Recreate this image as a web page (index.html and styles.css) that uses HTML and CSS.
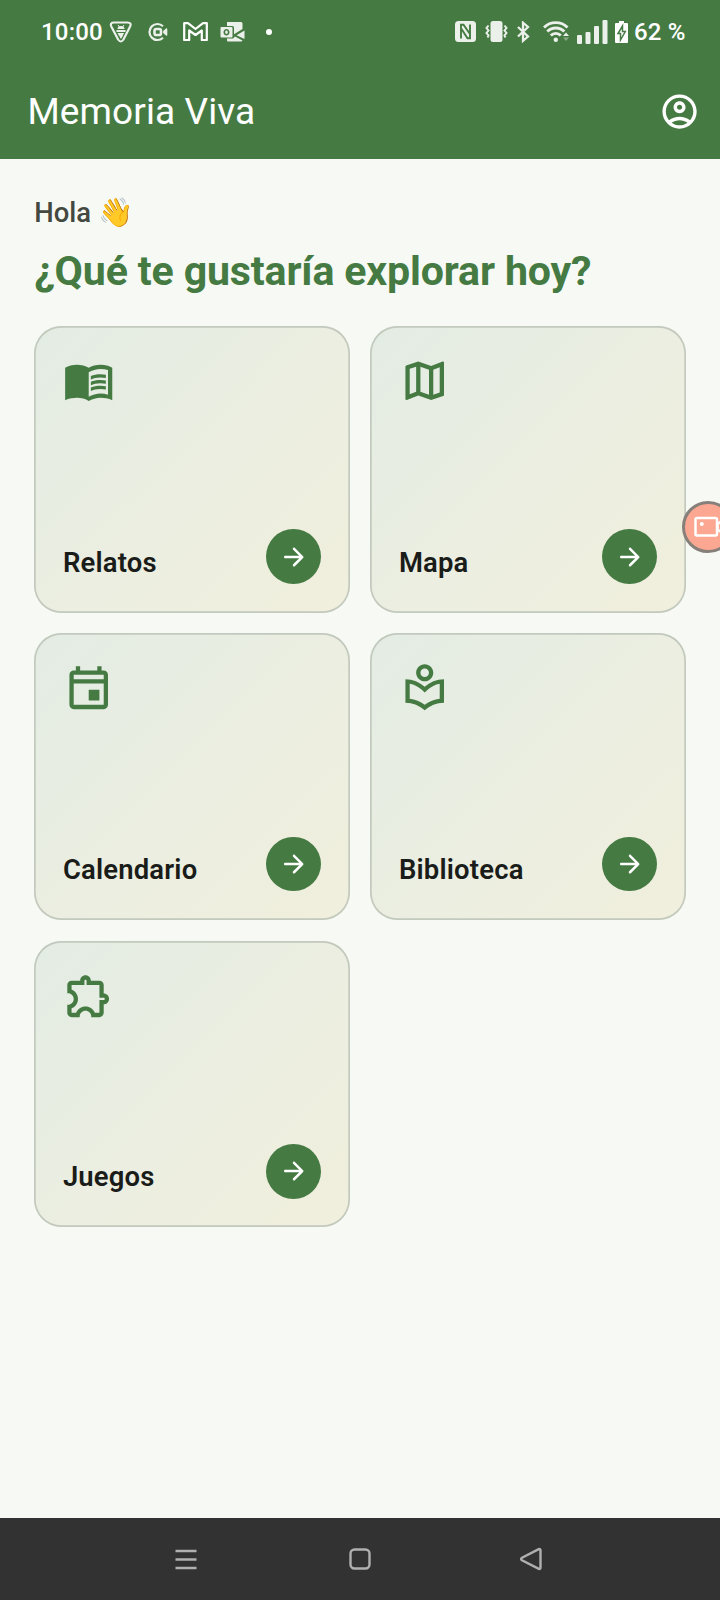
FILE: index.html
```html
<!DOCTYPE html>
<html lang="es">
<head>
<meta charset="utf-8">
<title>Memoria Viva</title>
<link rel="stylesheet" href="styles.css">
</head>
<body>
<svg class="defs" width="0" height="0" aria-hidden="true">
  <symbol id="arrow" viewBox="0 0 24 24"><path d="M5 13h11.17l-4.88 4.88c-.39.39-.39 1.03 0 1.42.39.39 1.02.39 1.41 0l6.59-6.59c.39-.39.39-1.02 0-1.41l-6.58-6.6c-.39-.39-1.02-.39-1.41 0-.39.39-.39 1.02 0 1.41L16.17 11H5c-.55 0-1 .45-1 1s.45 1 1 1z"/></symbol>
</svg>
<div class="screen">
  <header class="top">
    <div class="status">
      <div class="status-left">
        <span class="clock">10:00</span>
        <svg class="s-shield" width="24" height="24" viewBox="0 0 24 24"><path d="M5 2.500h13.500q4.500 0 2.600 4L14.500 19.500q-2.700 4-5.400 0L2.300 6.500q-1.700-4 2.700-4z" fill="none" stroke="currentColor" stroke-width="2.200"/><path d="M7.500 10h9v2h-9zM8.500 13h6.600l-1.300 2.500h-4zM10 15.500h4l-2 3.500zM8.500 9a3.500 3 0 0 1 7 0z"/><path d="M9 5l1.500 2M15 5l-1.500 2" stroke="currentColor"/></svg>
        <svg class="s-cam" width="20" height="20" viewBox="0 0 20 20"><path d="M15 4.200A8 8 0 1 0 15 15.800" fill="none" stroke="currentColor" stroke-width="2.200"/><rect x="6.500" y="7" width="6.500" height="6" rx="1.800" fill="none" stroke="currentColor" stroke-width="2.600"/><path d="M15 10q0-1 1-1.800l2-1.600q1.300-.8 1.300.6v5.600q0 1.400-1.300.6l-2-1.600q-1-.8-1-1.800z"/></svg>
        <svg class="s-mail" width="25" height="19" viewBox="0 0 25 19"><path d="M1.200 1.200H5L12.500 7 20 1.200h3.800V18H18.800V8.500L12.500 13 6.200 8.500V18H1.200z" fill="none" stroke="currentColor" stroke-width="2.200" stroke-linejoin="round"/></svg>
        <svg class="s-outlook" width="25" height="20" viewBox="0 0 25 20"><path d="M7 0h14q1.500 0 1.500 1.500V7l-8.500 5.200V5.500q0-1.500-1.500-1.500H7z"/><path d="M24.500 8.500v8.500L16.500 13.200z"/><path d="M7 16.500h6l2-2 7.500 4q-.5 1-1.500 1H8q-1 0-1-1z"/><path fill-rule="evenodd" d="M1.500 5h10q1 0 1 1v8.500q0 1-1 1h-10q-1 0-1-1V6q0-1 1-1zm5 2C4.700 7 3.500 8.300 3.500 10.300s1.200 3.200 3 3.200 3-1.200 3-3.200S8.300 7 6.500 7zm0 1.600c.8 0 1.300.6 1.300 1.700s-.5 1.700-1.300 1.700-1.300-.6-1.300-1.700.5-1.700 1.300-1.700z"/></svg>
        <span class="dot"></span>
      </div>
      <div class="status-right">
        <svg class="r-nfc" width="21" height="21" viewBox="0 0 21 21"><rect width="21" height="21" rx="3.500"/><path class="cut" d="M6 17.500V3.800h2.500L15 13M15 3.500v13.700h-2.500L6.500 8"/></svg>
        <svg class="r-vibe" width="23" height="21" viewBox="0 0 23 21"><rect x="5.500" y="0" width="12" height="21" rx="2.500"/><path d="M3.500 4.500L1.500 7l2 2.500L1.500 12l2 2.500-1 2M19.500 4.500l2 2.500-2 2.500 2 2.500-2 2.500 1 2" fill="none" stroke="currentColor" stroke-width="2"/></svg>
        <svg class="r-bt" width="13" height="22" viewBox="0 0 13 22"><path d="M1 6l10 9.500-5 4.300V1.700l5 4.300L1 15.500" fill="none" stroke="currentColor" stroke-width="2.300"/></svg>
        <svg class="r-wifi" width="26" height="21" viewBox="0 0 26 21"><g fill="none" stroke="currentColor" stroke-width="2.900"><path d="M1 6.500a16.500 16.500 0 0 1 23.500 0"/><path d="M4.300 10.500a12 12 0 0 1 17 0"/><path d="M7.800 14.500a7 7 0 0 1 10 0"/></g><circle cx="12.800" cy="18.700" r="2.200"/><path d="M20 15l3-3.500 3 3.500z"/><path opacity=".4" d="M20 16.500h6l-3 3.500z"/></svg>
        <svg class="r-signal" width="31" height="24" viewBox="0 0 31 24"><rect x="0" y="15" width="5" height="9" rx="1"/><rect x="8.500" y="12" width="5" height="12" rx="1"/><rect x="17" y="6" width="5" height="18" rx="1"/><rect x="25.500" y="0" width="5" height="24" rx="1"/></svg>
        <svg class="r-batt" width="13" height="22" viewBox="0 0 13 22"><path d="M4 0h5v2h3q1 0 1 1v18q0 1-1 1H1q-1 0-1-1V3q0-1 1-1h3z"/><path class="bolt" d="M7.500 5L3 12.500h2.500V19L10.300 10.500H7.500z"/></svg>
        <span class="percent">62 %</span>
      </div>
    </div>
    <div class="appbar">
      <h1 class="app-title">Memoria Viva</h1>
      <svg class="account" viewBox="0 0 24 24"><path d="M12 2C6.480 2 2 6.480 2 12s4.480 10 10 10 10-4.480 10-10S17.520 2 12 2zM7.350 18.500C8.660 17.560 10.260 17 12 17s3.340.56 4.650 1.500C15.340 19.440 13.740 20 12 20s-3.340-.56-4.650-1.500zm10.790-1.380C16.450 15.800 14.320 15 12 15s-4.450.8-6.140 2.120C4.700 15.730 4 13.950 4 12c0-4.420 3.580-8 8-8s8 3.580 8 8c0 1.950-.7 3.730-1.860 5.120zM12 6c-1.930 0-3.500 1.570-3.500 3.500S10.070 13 12 13s3.500-1.570 3.500-3.500S13.930 6 12 6zm0 5c-.83 0-1.500-.67-1.500-1.500S11.170 8 12 8s1.500.67 1.500 1.500S12.830 11 12 11z"/></svg>
    </div>
  </header>

  <main class="content">
    <p class="hello">Hola <span class="wave">👋</span></p>
    <h2 class="question">¿Qué te gustaría explorar hoy?</h2>
    <div class="grid">
      <article class="card">
        <svg class="card-icon" viewBox="0 0 24 24"><path d="M21 5c-1.110-.35-2.330-.5-3.500-.5-1.950 0-4.050.4-5.500 1.500-1.450-1.100-3.550-1.500-5.500-1.500S2.450 4.900 1 6v15.100C2.600 20.350 5.050 20 6.500 20c1.950 0 4.050.4 5.500 1.500 1.350-.85 3.800-1.500 5.500-1.500 1.650 0 3.900.35 5.500 1.100V6c-.6-.45-1.250-.75-2-1zm0 13.500c-1.100-.35-2.300-.5-3.500-.5-1.700 0-4.150.65-5.500 1.500V8c1.350-.85 3.800-1.500 5.500-1.500 1.200 0 2.400.15 3.500.5v11.500z"/><path d="M17.500 10.500c.88 0 1.730.09 2.500.26V9.240c-.79-.15-1.640-.24-2.500-.24-1.700 0-3.240.29-4.500.83v1.660c1.130-.64 2.700-.99 4.500-.99zM13 12.490v1.660c1.130-.64 2.700-.99 4.500-.99.88 0 1.730.09 2.500.26V11.900c-.79-.15-1.640-.24-2.500-.24-1.700 0-3.240.3-4.500.83zM17.500 14.330c-1.700 0-3.240.29-4.500.83v1.660c1.130-.64 2.700-.99 4.500-.99.88 0 1.730.09 2.500.26v-1.520c-.79-.16-1.640-.24-2.500-.24z"/></svg>
        <div class="card-foot"><span class="card-title">Relatos</span><span class="go"><svg class="go-icon"><use href="#arrow"/></svg></span></div>
      </article>
      <article class="card">
        <svg class="card-icon" viewBox="0 0 24 24"><path d="M20.500 3l-.16.03L15 5.100 9 3 3.360 4.900c-.21.07-.36.25-.36.48V20.500c0 .28.22.5.5.5l.16-.03L9 18.900l6 2.100 5.640-1.900c.21-.07.36-.25.36-.48V3.500c0-.28-.22-.5-.5-.5zM10 5.470l4 1.400v11.660l-4-1.400V5.470zm-5 .99l3-1.010v11.700l-3 1.160V6.460zm14 11.080l-3 1.010V6.860l3-1.160v11.840z"/></svg>
        <div class="card-foot"><span class="card-title">Mapa</span><span class="go"><svg class="go-icon"><use href="#arrow"/></svg></span></div>
      </article>
      <article class="card">
        <svg class="card-icon" viewBox="0 0 24 24"><path d="M19 4h-1V2h-2v2H8V2H6v2H5c-1.110 0-1.990.9-1.990 2L3 20c0 1.100.89 2 2 2h14c1.100 0 2-.9 2-2V6c0-1.100-.9-2-2-2zm0 16H5V10h14v10zm0-12H5V6h14v2zm-7 5h5v5h-5z"/></svg>
        <div class="card-foot"><span class="card-title">Calendario</span><span class="go"><svg class="go-icon"><use href="#arrow"/></svg></span></div>
      </article>
      <article class="card">
        <svg class="card-icon" viewBox="0 0 24 24"><path d="M16 5c0-2.210-1.790-4-4-4S8 2.790 8 5s1.790 4 4 4 4-1.790 4-4zm-4 2c-1.100 0-2-.9-2-2s.9-2 2-2 2 .9 2 2-.9 2-2 2zm0 4.550C9.640 9.350 6.480 8 3 8v11c3.480 0 6.640 1.350 9 3.550 2.360-2.190 5.520-3.550 9-3.550V8c-3.480 0-6.640 1.350-9 3.550zm7 5.580c-2.530.34-4.930 1.300-7 2.820-2.060-1.520-4.470-2.490-7-2.830v-6.950c2.100.38 4.050 1.350 5.640 2.830L12 14.280l1.360-1.270c1.590-1.480 3.540-2.450 5.640-2.830v6.950z"/></svg>
        <div class="card-foot"><span class="card-title">Biblioteca</span><span class="go"><svg class="go-icon"><use href="#arrow"/></svg></span></div>
      </article>
      <article class="card">
        <svg class="card-icon" viewBox="0 0 24 24"><path d="M10.500 4.500c.28 0 .5.22.5.5v2h6v6h2c.28 0 .5.22.5.5s-.22.5-.5.5h-2v6h-2.120c-.68-1.750-2.390-3-4.380-3s-3.700 1.250-4.380 3H4v-2.120c1.750-.68 3-2.390 3-4.380 0-1.990-1.240-3.700-2.990-4.380L4 7h6V5c0-.28.22-.5.5-.5m0-2C9.120 2.500 8 3.620 8 5H4c-1.100 0-1.990.9-1.990 2v3.800h.29c1.490 0 2.700 1.210 2.700 2.700s-1.210 2.700-2.700 2.700H2V20c0 1.100.9 2 2 2h3.800v-.3c0-1.490 1.210-2.700 2.700-2.700s2.700 1.210 2.700 2.700v.3H17c1.100 0 2-.9 2-2v-4c1.380 0 2.500-1.120 2.500-2.500S20.380 11 19 11V7c0-1.100-.9-2-2-2h-4c0-1.380-1.120-2.500-2.500-2.500z"/></svg>
        <div class="card-foot"><span class="card-title">Juegos</span><span class="go"><svg class="go-icon"><use href="#arrow"/></svg></span></div>
      </article>
    </div>
  </main>

  <nav class="navbar">
    <svg width="22" height="22" viewBox="0 0 22 22"><path d="M.5 3h21M.5 11.500h21M.5 20h21"/></svg>
    <svg width="22" height="22" viewBox="0 0 22 22"><rect x="1.500" y="1.500" width="19" height="19" rx="4"/></svg>
    <svg width="24" height="24" viewBox="0 0 24 24"><path d="M19.800 2.100L3 10.800q-1.800 1.200 0 2.400L19.800 21.900q1.700.5 1.700-1.400V3.500q0-1.900-1.700-1.400z"/></svg>
  </nav>

  <div class="recorder">
    <svg width="36" height="22" viewBox="0 0 36 22"><rect x="1.500" y="2" width="21.500" height="17.500" rx="1.500"/><path d="M23.500 8l5-3.500h3V17h-3l-5-3.500z"/><circle class="lens" cx="7.800" cy="8" r="2"/></svg>
  </div>
</div>
</body>
</html>
```
FILE: styles.css
```css
:root {
  --green: #457b43;
  --surface: #f7f9f4;
}

* { box-sizing: border-box; }

body {
  margin: 0;
  font-family: Roboto, "Noto Sans", sans-serif;
}

.defs { position: absolute; }

.screen {
  position: relative;
  display: flex;
  flex-direction: column;
  width: 720px;
  height: 1600px;
  overflow: hidden;
  background: var(--surface);
}

svg { display: block; flex: none; fill: currentColor; }

/* Status bar and app bar */
.top {
  height: 159px;
  background: var(--green);
  color: #fff;
}

.status {
  display: flex;
  justify-content: space-between;
  height: 63px;
  padding: 0 34px 0 41px;
}

.status-left, .status-right {
  display: flex;
  align-items: center;
  color: #ebf0ea;
}

.clock, .percent {
  color: #fff;
  font-size: 24px;
  font-weight: 500;
  line-height: 28px;
  letter-spacing: .2px;
}

.clock { width: 68px; }
.s-cam { margin-left: 15px; }
.s-mail { margin-left: 15px; color: #fff; }
.s-outlook { margin-left: 12px; }
.dot { width: 6px; height: 6px; margin-left: 21px; border-radius: 50%; background: #fff; }

.r-vibe { margin-left: 9px; }
.r-bt { margin-left: 9px; }
.r-wifi { margin-left: 13px; }
.r-signal { margin-left: 8px; }
.r-batt { margin-left: 7px; color: #fff; }
.percent { width: 52px; margin-left: 6px; white-space: nowrap; }
.cut { fill: none; stroke: var(--green); stroke-width: 1.900; }
.bolt { fill: #fff; stroke: var(--green); stroke-width: 1.500; }

.appbar {
  display: flex;
  align-items: center;
  justify-content: space-between;
  height: 96px;
  padding: 2px 20px 0 27.400px;
}

.app-title {
  margin: 0;
  font-size: 37px;
  font-weight: 400;
  line-height: 48px;
  letter-spacing: .1px;
}

.account { width: 41.140px; height: 41.140px; }

/* Content */
.content {
  flex: 1;
  padding: 34px 34.290px 0;
}

.hello {
  margin: 0;
  color: #434840;
  font-size: 27.430px;
  font-weight: 500;
  line-height: 41px;
}

.wave { font-size: 28.400px; line-height: 1; }

.question {
  margin: 10px 0 0;
  color: var(--green);
  font-size: 41.140px;
  font-weight: 700;
  line-height: 54px;
  letter-spacing: -.16px;
}

.grid {
  display: grid;
  grid-template-columns: 1fr 1fr;
  grid-auto-rows: 286.800px;
  gap: 20.570px;
  margin-top: 27.800px;
}

.card {
  display: flex;
  flex-direction: column;
  justify-content: space-between;
  padding: 29px 28.600px 28.600px;
  border-radius: 27.430px;
  background: linear-gradient(135deg, #e3ece4, #ebeee1 50%, #f1efdd);
  box-shadow: inset 0 0 0 1.714px #c2c9bd;
}

.card-icon {
  width: 51.430px;
  height: 51.430px;
  color: var(--green);
}

.card-foot {
  display: flex;
  align-items: flex-end;
  justify-content: space-between;
}

.card-title {
  color: #1a1c19;
  font-size: 27.430px;
  font-weight: 600;
  line-height: 41.500px;
  letter-spacing: .2px;
}

.go {
  display: grid;
  place-items: center;
  width: 54.860px;
  height: 54.860px;
  border-radius: 50%;
  background: var(--green);
  color: #fff;
}

.go-icon { width: 30px; height: 30px; }

/* System navigation */
.navbar {
  display: flex;
  align-items: center;
  justify-content: space-between;
  height: 82px;
  padding: 0 177px 0 175px;
  background: #323232;
}

.navbar svg { fill: none; stroke: #b0b0b0; stroke-width: 2.400; }
.navbar svg:nth-child(2) { margin-left: 3px; }

/* Floating recorder button, partly off the right edge */
.recorder {
  position: absolute;
  top: 501px;
  left: 682px;
  display: flex;
  align-items: center;
  width: 52px;
  height: 52px;
  padding-left: 8.500px;
  border: 3px solid #87807a;
  border-radius: 50%;
  background: #fba791;
}

.recorder svg { fill: none; stroke: #fff; stroke-width: 2.500; }
.recorder .lens { fill: #fff; stroke: none; }
```
